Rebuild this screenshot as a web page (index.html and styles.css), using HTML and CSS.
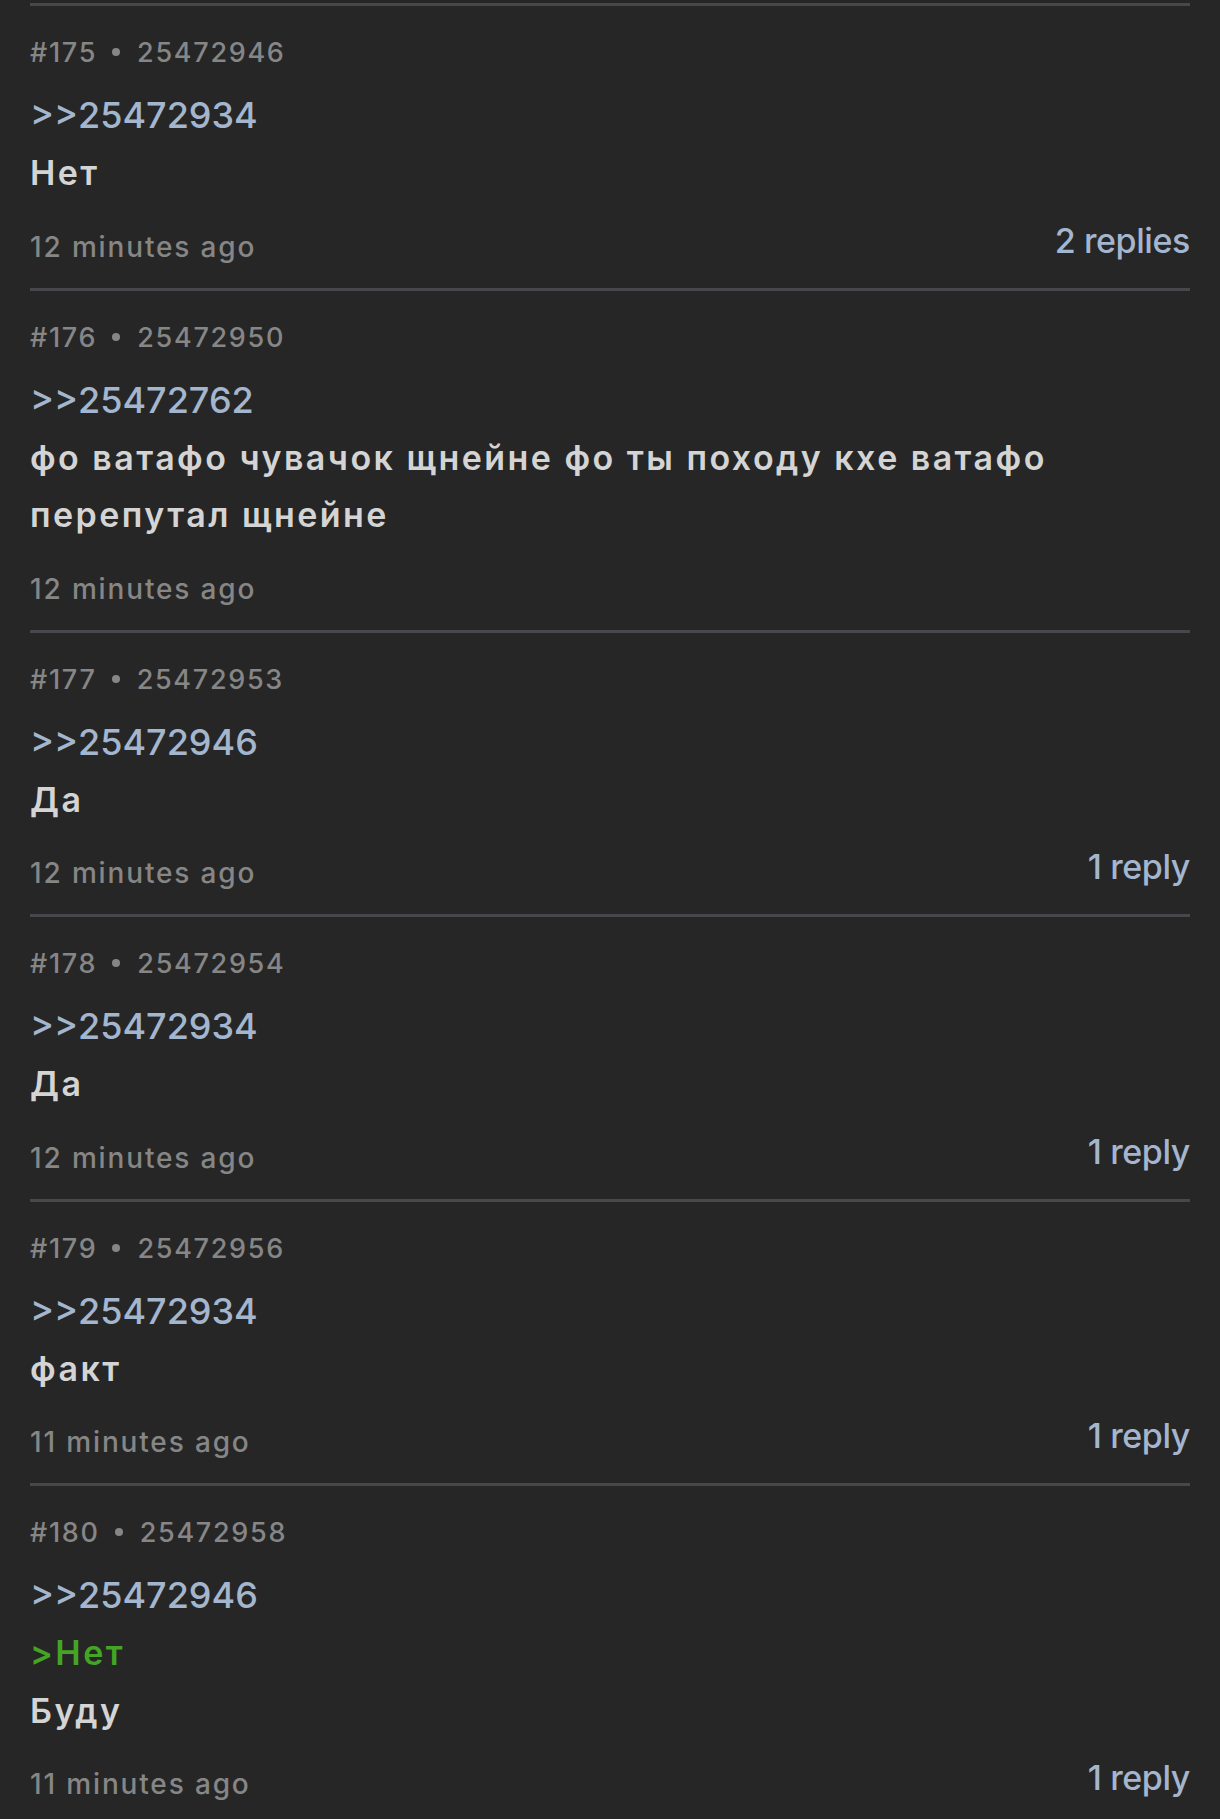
FILE: index.html
```html
<!DOCTYPE html>
<html lang="ru">
<head>
    <meta charset="UTF-8">
    <meta name="viewport" content="width=device-width, initial-scale=1.0">
    <title>Thread</title>
    <link rel="stylesheet" href="styles.css">
</head>
<body>
    <div class="thread">
        <div class="post">
            <div class="meta">#175<span class="dot"></span>25472946</div>
            <div class="quote">&gt;&gt;25472934</div>
            <div class="text">Нет</div>
            <div class="foot">
                <span class="time">12 minutes ago</span>
                <span class="replies">2 replies</span>
            </div>
        </div>
        <div class="post">
            <div class="meta">#176<span class="dot"></span>25472950</div>
            <div class="quote">&gt;&gt;25472762</div>
            <div class="text">фо ватафо чувачок щнейне фо ты походу кхе ватафо перепутал щнейне</div>
            <div class="foot">
                <span class="time">12 minutes ago</span>
            </div>
        </div>
        <div class="post">
            <div class="meta">#177<span class="dot"></span>25472953</div>
            <div class="quote">&gt;&gt;25472946</div>
            <div class="text">Да</div>
            <div class="foot">
                <span class="time">12 minutes ago</span>
                <span class="replies">1 reply</span>
            </div>
        </div>
        <div class="post">
            <div class="meta">#178<span class="dot"></span>25472954</div>
            <div class="quote">&gt;&gt;25472934</div>
            <div class="text">Да</div>
            <div class="foot">
                <span class="time">12 minutes ago</span>
                <span class="replies">1 reply</span>
            </div>
        </div>
        <div class="post">
            <div class="meta">#179<span class="dot"></span>25472956</div>
            <div class="quote">&gt;&gt;25472934</div>
            <div class="text">факт</div>
            <div class="foot">
                <span class="time">11 minutes ago</span>
                <span class="replies">1 reply</span>
            </div>
        </div>
        <div class="post">
            <div class="meta">#180<span class="dot"></span>25472958</div>
            <div class="quote">&gt;&gt;25472946</div>
            <div class="text"><span class="greentext">&gt;Нет</span><br>Буду</div>
            <div class="foot">
                <span class="time">11 minutes ago</span>
                <span class="replies">1 reply</span>
            </div>
        </div>
    </div>
</body>
</html>
```
FILE: styles.css
```css
body {
    margin: 0;
    background-color: #262626;
    font-family: Inter, "Noto Sans", sans-serif;
    font-weight: 500;
    overflow: hidden;
}
.thread {
    padding: 3px 30px 0;
}
.post {
    border-top: 3px solid #48484c;
    padding: 27px 0 21px;
}
.meta {
    font-size: 27px;
    line-height: 40px;
    letter-spacing: 1.7px;
    color: #868686;
    margin-bottom: 14px;
}
.dot {
    display: inline-block;
    width: 8px;
    height: 8px;
    border-radius: 50%;
    background-color: #868686;
    margin: 0 17px 0 15px;
    vertical-align: 6px;
}
.quote {
    font-size: 36px;
    line-height: 57px;
    color: #a4b6ce;
}
.text {
    font-size: 34px;
    font-weight: 600;
    line-height: 57.5px;
    letter-spacing: 2.45px;
    color: #d4d4d4;
    padding-right: 80px;
}
.greentext {
    color: #43a523;
}
.foot {
    display: flex;
    justify-content: space-between;
    align-items: flex-end;
    height: 52px;
    margin-top: 13px;
}
.time {
    font-size: 28px;
    line-height: 40px;
    letter-spacing: 1.85px;
    color: #868686;
}
.replies {
    font-size: 34px;
    line-height: 52px;
    letter-spacing: -0.4px;
    color: #a4b6ce;
}
```
